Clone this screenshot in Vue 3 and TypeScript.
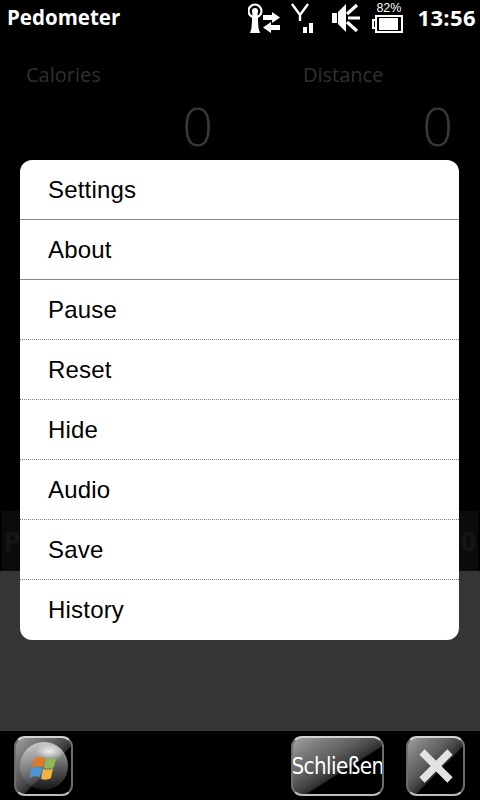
<script setup lang="ts">
const items: { label: string; solid: boolean }[] = [
  { label: 'Settings', solid: true },
  { label: 'About', solid: true },
  { label: 'Pause', solid: false },
  { label: 'Reset', solid: false },
  { label: 'Hide', solid: false },
  { label: 'Audio', solid: false },
  { label: 'Save', solid: false },
  { label: 'History', solid: false },
]
</script>

<template>
  <div class="screen">
    <header class="status">
      <span class="title">Pedometer</span>
      <div class="tray">
        <svg class="ico-net" width="32" height="36" viewBox="0 0 32 36">
          <circle cx="7" cy="11" r="6.5" fill="none" stroke="#fff" stroke-width="2.2" />
          <circle cx="7" cy="11" r="3" fill="#fff" />
          <path d="M4.5 12h5l1 16 1.5 5H2l1.500-5z" fill="#fff" />
          <path d="M15 15h9v-3l8 5.500-8 5.500v-3h-9zM32 25h-9v-3l-8 5.500 8 5.500v-3h9z" fill="#fff" />
        </svg>
        <svg class="ico-sig" width="23" height="36" viewBox="0 0 23 36">
          <path d="M1 4l8 11 8-11M9 15v6" fill="none" stroke="#fff" stroke-width="2.4" />
          <path d="M12 27h4v6h-4zM18 23h4v10h-4z" fill="#fff" />
        </svg>
        <svg class="ico-vol" width="28" height="36" viewBox="0 0 28 36">
          <path d="M0 13h5v10H0zM6 12l8-8v28l-8-8z" fill="#fff" />
          <path d="M15 14l10-9M16 18h12M15 22l10 9" fill="none" stroke="#fff" stroke-width="3.2" />
        </svg>
        <div class="batt">
          <span class="pct">82%</span>
          <svg width="31" height="18" viewBox="0 0 31 18">
            <path d="M4 1h26v16H4zM4 5H1v8h3" fill="none" stroke="#fff" stroke-width="2" />
            <path d="M7 3h19v12H7z" fill="#fff" />
          </svg>
        </div>
        <span class="time">13:56</span>
      </div>
    </header>

    <main class="content">
      <section class="stats">
        <div class="stat">
          <div class="stat-label">Calories</div>
          <div class="stat-value first">0</div>
        </div>
        <div class="stat">
          <div class="stat-label">Distance</div>
          <div class="stat-value">0</div>
        </div>
      </section>
      <section class="band">
        <span>P</span>
        <span>0</span>
      </section>
    </main>

    <div class="grey"></div>

    <footer class="bar">
      <button class="gloss start" aria-label="Start">
        <span class="orb">
          <svg width="48" height="48" viewBox="0 0 48 48">
            <path d="M14 17c3-2 7-2 11-1l-2 9c-4-1-8-1-11 1z" fill="#e07a26" />
            <path d="M26 16c3 1 6 1 10-1l-2 10c-3 2-7 2-10 1z" fill="#8fb85c" />
            <path d="M11 27c3-2 7-2 11-1l-2 9c-4-1-8-1-11 1z" fill="#4a95d8" />
            <path d="M23 27c3 1 7 1 10-1l-2 10c-3 2-7 2-10 1z" fill="#edb540" />
          </svg>
        </span>
      </button>
      <div class="right">
        <button class="gloss close-text"><span class="tall">Schließen</span></button>
        <button class="gloss close-x" aria-label="Close">
          <svg width="36" height="36" viewBox="0 0 36 36">
            <path d="M4 4l28 28M32 4L4 32" stroke="#e2e2e2" stroke-width="7.500" fill="none" />
          </svg>
        </button>
      </div>
    </footer>

    <nav class="menu">
      <div
        v-for="item in items"
        :key="item.label"
        class="row"
        :class="item.solid ? 'solid' : 'dotted'"
      >{{ item.label }}</div>
    </nav>
  </div>
</template>

<style>
html, body { background: #000; }
</style>

<style scoped>
.screen {
  position: relative;
  width: 480px;
  height: 800px;
  background: #000;
  overflow: hidden;
  display: flex;
  flex-direction: column;
}
.status {
  height: 36px;
  flex: none;
  display: flex;
  align-items: flex-start;
  justify-content: space-between;
  padding: 0 4px 0 7px;
  color: #fff;
  font-family: "Open Sans", sans-serif;
}
.title {
  font-size: 20.5px;
  line-height: 35px;
  font-weight: 700;
}
.tray {
  display: flex;
  align-items: flex-start;
}
.ico-net { margin-right: 11px; }
.ico-sig { margin-right: 18px; }
.ico-vol { margin-right: 12px; }
.batt {
  width: 31px;
  height: 36px;
  padding-top: 2px;
  box-sizing: border-box;
  display: flex;
  flex-direction: column;
  align-items: center;
}
.batt svg { flex: none; }
.pct {
  font-family: "Liberation Sans", sans-serif;
  font-size: 12.5px;
  line-height: 12px;
  margin-bottom: 1px;
  padding-left: 2px;
}
.time {
  margin-left: 14px;
  font-size: 22px;
  line-height: 35px;
  font-weight: 700;
  letter-spacing: 0.4px;
}
.content {
  flex: 1;
  display: flex;
  flex-direction: column;
  justify-content: space-between;
  font-family: "Open Sans", sans-serif;
}
.stats {
  display: grid;
  grid-template-columns: 277px 150px;
  padding: 27px 0 0 26px;
}
.stat-label {
  font-size: 20px;
  line-height: 24px;
  color: #2e322e;
}
.stat-value {
  font-size: 54px;
  font-weight: 300;
  line-height: 60px;
  margin-top: 8px;
  color: #353a35;
  text-align: right;
}
.stat-value.first { padding-right: 90px; }
.band {
  height: 60px;
  margin: 0 2px;
  background: #090c09;
  display: flex;
  align-items: center;
  justify-content: space-between;
  padding: 0 2px;
  color: #141714;
  font-size: 26px;
  font-weight: 700;
}
.grey {
  height: 160px;
  flex: none;
  background: #343633;
}
.bar {
  height: 68px;
  flex: none;
  display: flex;
  align-items: center;
  justify-content: space-between;
  padding: 1px 15px 0 14px;
}
.right {
  display: flex;
  gap: 22px;
}
.gloss {
  position: relative;
  height: 60px;
  padding: 0;
  border: 2px solid #6e6e6e;
  border-top-color: #d2d2d2;
  border-bottom-color: #bdbdbd;
  border-radius: 11px;
  background: linear-gradient(to bottom right, #a2a2a2 0%, #7a7a7a 20%, #626262 36%, #484848 48%, #2c2c2c 57%, #000 58%, #000 100%);
  color: #fff;
  display: flex;
  align-items: center;
  justify-content: center;
  box-sizing: border-box;
  overflow: hidden;
}
.start { width: 59px; }
.orb {
  width: 48px;
  height: 48px;
  border-radius: 50%;
  display: block;
  background:
    radial-gradient(ellipse 30% 16% at 62% 20%, rgba(255,255,255,.8) 0%, rgba(255,255,255,0) 100%),
    linear-gradient(to bottom, rgba(215,215,215,.85) 0%, rgba(160,160,160,.6) 50%, rgba(60,60,60,.35) 100%);
}
.orb svg { display: block; }
.close-text {
  width: 93px;
  font-family: "DejaVu Sans", sans-serif;
  font-size: 20px;
  letter-spacing: -0.6px;
  white-space: nowrap;
}
.tall {
  display: block;
  transform: scaleY(1.15);
}
.close-x { width: 59px; }
.menu {
  position: absolute;
  left: 20px;
  top: 160px;
  width: 439px;
  background: #fff;
  border-radius: 12px;
  overflow: hidden;
  font-family: "Liberation Sans", sans-serif;
}
.row {
  height: 60px;
  box-sizing: border-box;
  display: flex;
  align-items: center;
  padding: 0 0 0 28px;
  font-size: 24px;
  letter-spacing: 0.2px;
  color: #000;
}
.solid { border-bottom: 1px solid #8a8a8a; }
.dotted { border-bottom: 1px dotted #7a7a7a; }
.row:last-child { border-bottom: 0; }
</style>
